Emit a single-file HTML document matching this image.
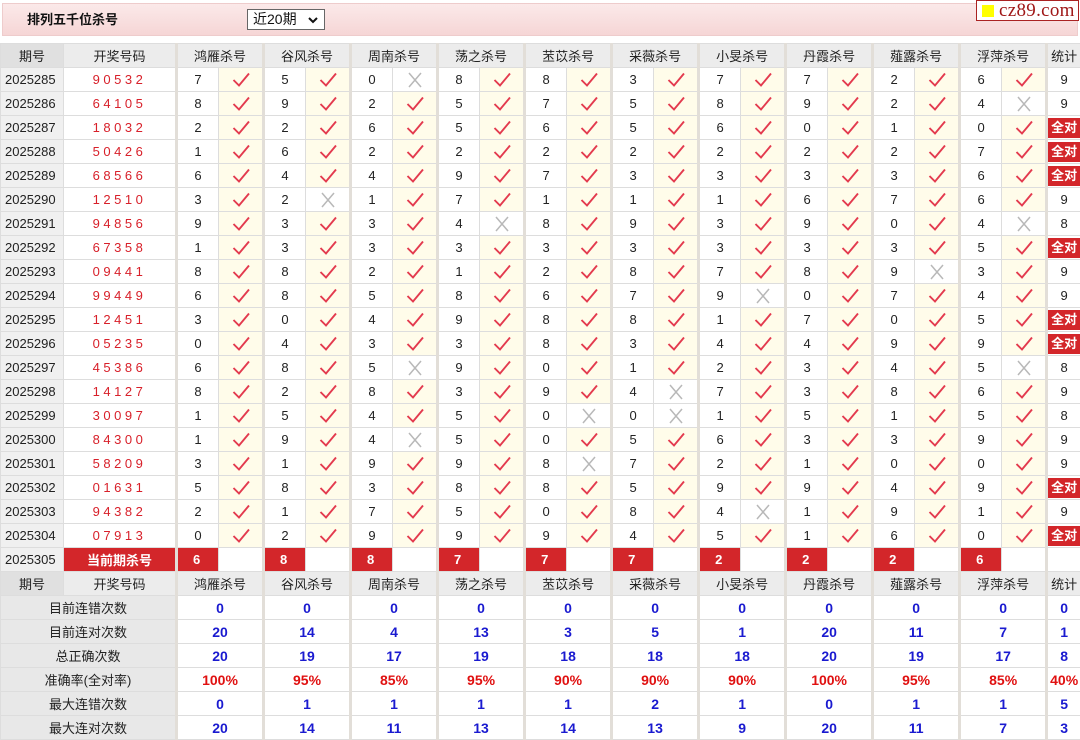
<!DOCTYPE html>
<html><head><meta charset="utf-8">
<style>
*{margin:0;padding:0;box-sizing:border-box}
body{width:1080px;height:739px;background:#fff;font-family:"Liberation Sans","Noto Sans CJK SC",sans-serif;font-size:13px;color:#222;overflow:hidden;position:relative}
.top{position:absolute;left:2px;top:3px;width:1076px;height:33px;background:linear-gradient(#fbe9e9,#f6d6d6);border:1px solid #ecc}
.title{position:absolute;left:24px;top:5px;font-weight:bold;font-size:13px;color:#111}
.sel{position:absolute;left:244px;top:5px;width:78px;height:21px;border:1px solid #666;background:#fff;font-size:14px;padding-left:5px;line-height:19px;color:#111}
.sel svg{position:absolute;right:6px;top:7px}
.logo{position:absolute;left:976px;top:0px;width:103px;height:21px;border:1px solid #a22;background:#fff;font-family:"Liberation Serif",serif;font-size:19px;color:#a01818;line-height:19px;padding-left:22px;letter-spacing:0.3px}
.logo i{position:absolute;left:5px;top:4px;width:12px;height:12px;background:#ff0}
table{position:absolute;left:0;top:43px;border-collapse:collapse;table-layout:fixed;width:1080px}
td{height:24px;border:1px solid #ddd;text-align:center;white-space:nowrap;overflow:hidden;padding:0}
td.p{background:#f0f0f0;text-align:left;padding-left:4px}
td.c{color:#d8202a;letter-spacing:3.5px}
td.n{border-left:3px solid #e2ded8}
td.k{background:#fffcea}
td.x{background:#fff}
tr.h td{background:#ececec;font-size:13px}
tr.h td.p{background:#e0e0e0;text-align:center;padding:0}
tr.cur td.c,tr.cur td.r{background:#d3262a;color:#fff;font-weight:bold;letter-spacing:0;font-size:13px}
tr.cur td.r{text-align:left;padding-left:15px}
td.s{border-left:3px solid #e2ded8}
.qd{display:inline-block;background:#d3262a;color:#fff;font-weight:bold;padding:0 3px;line-height:20px}
td.lab{background:#e8e8e8}
td.v{color:#1a1ad0;font-weight:bold;border-left:3px solid #e2ded8;font-size:14px}
td.v.rd{color:#e01010}
svg.i{width:20px;height:16px;vertical-align:middle}
</style></head><body>
<svg width="0" height="0" style="position:absolute"><defs>
<symbol id="ck" viewBox="0 0 20 16"><path d="M2.5 8 L8 13.5 L18 1.5" fill="none" stroke="#e33a4e" stroke-width="1.9"/></symbol>
<symbol id="xx" viewBox="0 0 20 16"><path d="M4 1 L16 15 M16 1 L4 15" fill="none" stroke="#b8b8b8" stroke-width="1.5"/></symbol>
</defs></svg>
<div class="top"><div class="title">排列五千位杀号</div><div class="sel">近20期<svg width="10" height="7"><path d="M1 1 L5 5 L9 1" fill="none" stroke="#111" stroke-width="2"/></svg></div></div>
<div class="logo"><i></i>cz89.com</div>
<table>
<colgroup><col style="width:63px"><col style="width:113px"><col style="width:42px"><col style="width:45px"><col style="width:42px"><col style="width:45px"><col style="width:42px"><col style="width:45px"><col style="width:42px"><col style="width:45px"><col style="width:42px"><col style="width:45px"><col style="width:42px"><col style="width:45px"><col style="width:42px"><col style="width:45px"><col style="width:42px"><col style="width:45px"><col style="width:42px"><col style="width:45px"><col style="width:42px"><col style="width:45px"><col style="width:34px"></colgroup>
<tr class="h"><td class="p">期号</td><td>开奖号码</td><td colspan="2" class="s">鸿雁杀号</td><td colspan="2" class="s">谷风杀号</td><td colspan="2" class="s">周南杀号</td><td colspan="2" class="s">荡之杀号</td><td colspan="2" class="s">苤苡杀号</td><td colspan="2" class="s">采薇杀号</td><td colspan="2" class="s">小旻杀号</td><td colspan="2" class="s">丹霞杀号</td><td colspan="2" class="s">薤露杀号</td><td colspan="2" class="s">浮萍杀号</td><td class="s">统计</td></tr>
<tr><td class="p">2025285</td><td class="c">90532</td><td class="n">7</td><td class="k"><svg class="i"><use href="#ck"/></svg></td><td class="n">5</td><td class="k"><svg class="i"><use href="#ck"/></svg></td><td class="n">0</td><td class="x"><svg class="i"><use href="#xx"/></svg></td><td class="n">8</td><td class="k"><svg class="i"><use href="#ck"/></svg></td><td class="n">8</td><td class="k"><svg class="i"><use href="#ck"/></svg></td><td class="n">3</td><td class="k"><svg class="i"><use href="#ck"/></svg></td><td class="n">7</td><td class="k"><svg class="i"><use href="#ck"/></svg></td><td class="n">7</td><td class="k"><svg class="i"><use href="#ck"/></svg></td><td class="n">2</td><td class="k"><svg class="i"><use href="#ck"/></svg></td><td class="n">6</td><td class="k"><svg class="i"><use href="#ck"/></svg></td><td class="s">9</td></tr>
<tr><td class="p">2025286</td><td class="c">64105</td><td class="n">8</td><td class="k"><svg class="i"><use href="#ck"/></svg></td><td class="n">9</td><td class="k"><svg class="i"><use href="#ck"/></svg></td><td class="n">2</td><td class="k"><svg class="i"><use href="#ck"/></svg></td><td class="n">5</td><td class="k"><svg class="i"><use href="#ck"/></svg></td><td class="n">7</td><td class="k"><svg class="i"><use href="#ck"/></svg></td><td class="n">5</td><td class="k"><svg class="i"><use href="#ck"/></svg></td><td class="n">8</td><td class="k"><svg class="i"><use href="#ck"/></svg></td><td class="n">9</td><td class="k"><svg class="i"><use href="#ck"/></svg></td><td class="n">2</td><td class="k"><svg class="i"><use href="#ck"/></svg></td><td class="n">4</td><td class="x"><svg class="i"><use href="#xx"/></svg></td><td class="s">9</td></tr>
<tr><td class="p">2025287</td><td class="c">18032</td><td class="n">2</td><td class="k"><svg class="i"><use href="#ck"/></svg></td><td class="n">2</td><td class="k"><svg class="i"><use href="#ck"/></svg></td><td class="n">6</td><td class="k"><svg class="i"><use href="#ck"/></svg></td><td class="n">5</td><td class="k"><svg class="i"><use href="#ck"/></svg></td><td class="n">6</td><td class="k"><svg class="i"><use href="#ck"/></svg></td><td class="n">5</td><td class="k"><svg class="i"><use href="#ck"/></svg></td><td class="n">6</td><td class="k"><svg class="i"><use href="#ck"/></svg></td><td class="n">0</td><td class="k"><svg class="i"><use href="#ck"/></svg></td><td class="n">1</td><td class="k"><svg class="i"><use href="#ck"/></svg></td><td class="n">0</td><td class="k"><svg class="i"><use href="#ck"/></svg></td><td class="s"><span class="qd">全对</span></td></tr>
<tr><td class="p">2025288</td><td class="c">50426</td><td class="n">1</td><td class="k"><svg class="i"><use href="#ck"/></svg></td><td class="n">6</td><td class="k"><svg class="i"><use href="#ck"/></svg></td><td class="n">2</td><td class="k"><svg class="i"><use href="#ck"/></svg></td><td class="n">2</td><td class="k"><svg class="i"><use href="#ck"/></svg></td><td class="n">2</td><td class="k"><svg class="i"><use href="#ck"/></svg></td><td class="n">2</td><td class="k"><svg class="i"><use href="#ck"/></svg></td><td class="n">2</td><td class="k"><svg class="i"><use href="#ck"/></svg></td><td class="n">2</td><td class="k"><svg class="i"><use href="#ck"/></svg></td><td class="n">2</td><td class="k"><svg class="i"><use href="#ck"/></svg></td><td class="n">7</td><td class="k"><svg class="i"><use href="#ck"/></svg></td><td class="s"><span class="qd">全对</span></td></tr>
<tr><td class="p">2025289</td><td class="c">68566</td><td class="n">6</td><td class="k"><svg class="i"><use href="#ck"/></svg></td><td class="n">4</td><td class="k"><svg class="i"><use href="#ck"/></svg></td><td class="n">4</td><td class="k"><svg class="i"><use href="#ck"/></svg></td><td class="n">9</td><td class="k"><svg class="i"><use href="#ck"/></svg></td><td class="n">7</td><td class="k"><svg class="i"><use href="#ck"/></svg></td><td class="n">3</td><td class="k"><svg class="i"><use href="#ck"/></svg></td><td class="n">3</td><td class="k"><svg class="i"><use href="#ck"/></svg></td><td class="n">3</td><td class="k"><svg class="i"><use href="#ck"/></svg></td><td class="n">3</td><td class="k"><svg class="i"><use href="#ck"/></svg></td><td class="n">6</td><td class="k"><svg class="i"><use href="#ck"/></svg></td><td class="s"><span class="qd">全对</span></td></tr>
<tr><td class="p">2025290</td><td class="c">12510</td><td class="n">3</td><td class="k"><svg class="i"><use href="#ck"/></svg></td><td class="n">2</td><td class="x"><svg class="i"><use href="#xx"/></svg></td><td class="n">1</td><td class="k"><svg class="i"><use href="#ck"/></svg></td><td class="n">7</td><td class="k"><svg class="i"><use href="#ck"/></svg></td><td class="n">1</td><td class="k"><svg class="i"><use href="#ck"/></svg></td><td class="n">1</td><td class="k"><svg class="i"><use href="#ck"/></svg></td><td class="n">1</td><td class="k"><svg class="i"><use href="#ck"/></svg></td><td class="n">6</td><td class="k"><svg class="i"><use href="#ck"/></svg></td><td class="n">7</td><td class="k"><svg class="i"><use href="#ck"/></svg></td><td class="n">6</td><td class="k"><svg class="i"><use href="#ck"/></svg></td><td class="s">9</td></tr>
<tr><td class="p">2025291</td><td class="c">94856</td><td class="n">9</td><td class="k"><svg class="i"><use href="#ck"/></svg></td><td class="n">3</td><td class="k"><svg class="i"><use href="#ck"/></svg></td><td class="n">3</td><td class="k"><svg class="i"><use href="#ck"/></svg></td><td class="n">4</td><td class="x"><svg class="i"><use href="#xx"/></svg></td><td class="n">8</td><td class="k"><svg class="i"><use href="#ck"/></svg></td><td class="n">9</td><td class="k"><svg class="i"><use href="#ck"/></svg></td><td class="n">3</td><td class="k"><svg class="i"><use href="#ck"/></svg></td><td class="n">9</td><td class="k"><svg class="i"><use href="#ck"/></svg></td><td class="n">0</td><td class="k"><svg class="i"><use href="#ck"/></svg></td><td class="n">4</td><td class="x"><svg class="i"><use href="#xx"/></svg></td><td class="s">8</td></tr>
<tr><td class="p">2025292</td><td class="c">67358</td><td class="n">1</td><td class="k"><svg class="i"><use href="#ck"/></svg></td><td class="n">3</td><td class="k"><svg class="i"><use href="#ck"/></svg></td><td class="n">3</td><td class="k"><svg class="i"><use href="#ck"/></svg></td><td class="n">3</td><td class="k"><svg class="i"><use href="#ck"/></svg></td><td class="n">3</td><td class="k"><svg class="i"><use href="#ck"/></svg></td><td class="n">3</td><td class="k"><svg class="i"><use href="#ck"/></svg></td><td class="n">3</td><td class="k"><svg class="i"><use href="#ck"/></svg></td><td class="n">3</td><td class="k"><svg class="i"><use href="#ck"/></svg></td><td class="n">3</td><td class="k"><svg class="i"><use href="#ck"/></svg></td><td class="n">5</td><td class="k"><svg class="i"><use href="#ck"/></svg></td><td class="s"><span class="qd">全对</span></td></tr>
<tr><td class="p">2025293</td><td class="c">09441</td><td class="n">8</td><td class="k"><svg class="i"><use href="#ck"/></svg></td><td class="n">8</td><td class="k"><svg class="i"><use href="#ck"/></svg></td><td class="n">2</td><td class="k"><svg class="i"><use href="#ck"/></svg></td><td class="n">1</td><td class="k"><svg class="i"><use href="#ck"/></svg></td><td class="n">2</td><td class="k"><svg class="i"><use href="#ck"/></svg></td><td class="n">8</td><td class="k"><svg class="i"><use href="#ck"/></svg></td><td class="n">7</td><td class="k"><svg class="i"><use href="#ck"/></svg></td><td class="n">8</td><td class="k"><svg class="i"><use href="#ck"/></svg></td><td class="n">9</td><td class="x"><svg class="i"><use href="#xx"/></svg></td><td class="n">3</td><td class="k"><svg class="i"><use href="#ck"/></svg></td><td class="s">9</td></tr>
<tr><td class="p">2025294</td><td class="c">99449</td><td class="n">6</td><td class="k"><svg class="i"><use href="#ck"/></svg></td><td class="n">8</td><td class="k"><svg class="i"><use href="#ck"/></svg></td><td class="n">5</td><td class="k"><svg class="i"><use href="#ck"/></svg></td><td class="n">8</td><td class="k"><svg class="i"><use href="#ck"/></svg></td><td class="n">6</td><td class="k"><svg class="i"><use href="#ck"/></svg></td><td class="n">7</td><td class="k"><svg class="i"><use href="#ck"/></svg></td><td class="n">9</td><td class="x"><svg class="i"><use href="#xx"/></svg></td><td class="n">0</td><td class="k"><svg class="i"><use href="#ck"/></svg></td><td class="n">7</td><td class="k"><svg class="i"><use href="#ck"/></svg></td><td class="n">4</td><td class="k"><svg class="i"><use href="#ck"/></svg></td><td class="s">9</td></tr>
<tr><td class="p">2025295</td><td class="c">12451</td><td class="n">3</td><td class="k"><svg class="i"><use href="#ck"/></svg></td><td class="n">0</td><td class="k"><svg class="i"><use href="#ck"/></svg></td><td class="n">4</td><td class="k"><svg class="i"><use href="#ck"/></svg></td><td class="n">9</td><td class="k"><svg class="i"><use href="#ck"/></svg></td><td class="n">8</td><td class="k"><svg class="i"><use href="#ck"/></svg></td><td class="n">8</td><td class="k"><svg class="i"><use href="#ck"/></svg></td><td class="n">1</td><td class="k"><svg class="i"><use href="#ck"/></svg></td><td class="n">7</td><td class="k"><svg class="i"><use href="#ck"/></svg></td><td class="n">0</td><td class="k"><svg class="i"><use href="#ck"/></svg></td><td class="n">5</td><td class="k"><svg class="i"><use href="#ck"/></svg></td><td class="s"><span class="qd">全对</span></td></tr>
<tr><td class="p">2025296</td><td class="c">05235</td><td class="n">0</td><td class="k"><svg class="i"><use href="#ck"/></svg></td><td class="n">4</td><td class="k"><svg class="i"><use href="#ck"/></svg></td><td class="n">3</td><td class="k"><svg class="i"><use href="#ck"/></svg></td><td class="n">3</td><td class="k"><svg class="i"><use href="#ck"/></svg></td><td class="n">8</td><td class="k"><svg class="i"><use href="#ck"/></svg></td><td class="n">3</td><td class="k"><svg class="i"><use href="#ck"/></svg></td><td class="n">4</td><td class="k"><svg class="i"><use href="#ck"/></svg></td><td class="n">4</td><td class="k"><svg class="i"><use href="#ck"/></svg></td><td class="n">9</td><td class="k"><svg class="i"><use href="#ck"/></svg></td><td class="n">9</td><td class="k"><svg class="i"><use href="#ck"/></svg></td><td class="s"><span class="qd">全对</span></td></tr>
<tr><td class="p">2025297</td><td class="c">45386</td><td class="n">6</td><td class="k"><svg class="i"><use href="#ck"/></svg></td><td class="n">8</td><td class="k"><svg class="i"><use href="#ck"/></svg></td><td class="n">5</td><td class="x"><svg class="i"><use href="#xx"/></svg></td><td class="n">9</td><td class="k"><svg class="i"><use href="#ck"/></svg></td><td class="n">0</td><td class="k"><svg class="i"><use href="#ck"/></svg></td><td class="n">1</td><td class="k"><svg class="i"><use href="#ck"/></svg></td><td class="n">2</td><td class="k"><svg class="i"><use href="#ck"/></svg></td><td class="n">3</td><td class="k"><svg class="i"><use href="#ck"/></svg></td><td class="n">4</td><td class="k"><svg class="i"><use href="#ck"/></svg></td><td class="n">5</td><td class="x"><svg class="i"><use href="#xx"/></svg></td><td class="s">8</td></tr>
<tr><td class="p">2025298</td><td class="c">14127</td><td class="n">8</td><td class="k"><svg class="i"><use href="#ck"/></svg></td><td class="n">2</td><td class="k"><svg class="i"><use href="#ck"/></svg></td><td class="n">8</td><td class="k"><svg class="i"><use href="#ck"/></svg></td><td class="n">3</td><td class="k"><svg class="i"><use href="#ck"/></svg></td><td class="n">9</td><td class="k"><svg class="i"><use href="#ck"/></svg></td><td class="n">4</td><td class="x"><svg class="i"><use href="#xx"/></svg></td><td class="n">7</td><td class="k"><svg class="i"><use href="#ck"/></svg></td><td class="n">3</td><td class="k"><svg class="i"><use href="#ck"/></svg></td><td class="n">8</td><td class="k"><svg class="i"><use href="#ck"/></svg></td><td class="n">6</td><td class="k"><svg class="i"><use href="#ck"/></svg></td><td class="s">9</td></tr>
<tr><td class="p">2025299</td><td class="c">30097</td><td class="n">1</td><td class="k"><svg class="i"><use href="#ck"/></svg></td><td class="n">5</td><td class="k"><svg class="i"><use href="#ck"/></svg></td><td class="n">4</td><td class="k"><svg class="i"><use href="#ck"/></svg></td><td class="n">5</td><td class="k"><svg class="i"><use href="#ck"/></svg></td><td class="n">0</td><td class="x"><svg class="i"><use href="#xx"/></svg></td><td class="n">0</td><td class="x"><svg class="i"><use href="#xx"/></svg></td><td class="n">1</td><td class="k"><svg class="i"><use href="#ck"/></svg></td><td class="n">5</td><td class="k"><svg class="i"><use href="#ck"/></svg></td><td class="n">1</td><td class="k"><svg class="i"><use href="#ck"/></svg></td><td class="n">5</td><td class="k"><svg class="i"><use href="#ck"/></svg></td><td class="s">8</td></tr>
<tr><td class="p">2025300</td><td class="c">84300</td><td class="n">1</td><td class="k"><svg class="i"><use href="#ck"/></svg></td><td class="n">9</td><td class="k"><svg class="i"><use href="#ck"/></svg></td><td class="n">4</td><td class="x"><svg class="i"><use href="#xx"/></svg></td><td class="n">5</td><td class="k"><svg class="i"><use href="#ck"/></svg></td><td class="n">0</td><td class="k"><svg class="i"><use href="#ck"/></svg></td><td class="n">5</td><td class="k"><svg class="i"><use href="#ck"/></svg></td><td class="n">6</td><td class="k"><svg class="i"><use href="#ck"/></svg></td><td class="n">3</td><td class="k"><svg class="i"><use href="#ck"/></svg></td><td class="n">3</td><td class="k"><svg class="i"><use href="#ck"/></svg></td><td class="n">9</td><td class="k"><svg class="i"><use href="#ck"/></svg></td><td class="s">9</td></tr>
<tr><td class="p">2025301</td><td class="c">58209</td><td class="n">3</td><td class="k"><svg class="i"><use href="#ck"/></svg></td><td class="n">1</td><td class="k"><svg class="i"><use href="#ck"/></svg></td><td class="n">9</td><td class="k"><svg class="i"><use href="#ck"/></svg></td><td class="n">9</td><td class="k"><svg class="i"><use href="#ck"/></svg></td><td class="n">8</td><td class="x"><svg class="i"><use href="#xx"/></svg></td><td class="n">7</td><td class="k"><svg class="i"><use href="#ck"/></svg></td><td class="n">2</td><td class="k"><svg class="i"><use href="#ck"/></svg></td><td class="n">1</td><td class="k"><svg class="i"><use href="#ck"/></svg></td><td class="n">0</td><td class="k"><svg class="i"><use href="#ck"/></svg></td><td class="n">0</td><td class="k"><svg class="i"><use href="#ck"/></svg></td><td class="s">9</td></tr>
<tr><td class="p">2025302</td><td class="c">01631</td><td class="n">5</td><td class="k"><svg class="i"><use href="#ck"/></svg></td><td class="n">8</td><td class="k"><svg class="i"><use href="#ck"/></svg></td><td class="n">3</td><td class="k"><svg class="i"><use href="#ck"/></svg></td><td class="n">8</td><td class="k"><svg class="i"><use href="#ck"/></svg></td><td class="n">8</td><td class="k"><svg class="i"><use href="#ck"/></svg></td><td class="n">5</td><td class="k"><svg class="i"><use href="#ck"/></svg></td><td class="n">9</td><td class="k"><svg class="i"><use href="#ck"/></svg></td><td class="n">9</td><td class="k"><svg class="i"><use href="#ck"/></svg></td><td class="n">4</td><td class="k"><svg class="i"><use href="#ck"/></svg></td><td class="n">9</td><td class="k"><svg class="i"><use href="#ck"/></svg></td><td class="s"><span class="qd">全对</span></td></tr>
<tr><td class="p">2025303</td><td class="c">94382</td><td class="n">2</td><td class="k"><svg class="i"><use href="#ck"/></svg></td><td class="n">1</td><td class="k"><svg class="i"><use href="#ck"/></svg></td><td class="n">7</td><td class="k"><svg class="i"><use href="#ck"/></svg></td><td class="n">5</td><td class="k"><svg class="i"><use href="#ck"/></svg></td><td class="n">0</td><td class="k"><svg class="i"><use href="#ck"/></svg></td><td class="n">8</td><td class="k"><svg class="i"><use href="#ck"/></svg></td><td class="n">4</td><td class="x"><svg class="i"><use href="#xx"/></svg></td><td class="n">1</td><td class="k"><svg class="i"><use href="#ck"/></svg></td><td class="n">9</td><td class="k"><svg class="i"><use href="#ck"/></svg></td><td class="n">1</td><td class="k"><svg class="i"><use href="#ck"/></svg></td><td class="s">9</td></tr>
<tr><td class="p">2025304</td><td class="c">07913</td><td class="n">0</td><td class="k"><svg class="i"><use href="#ck"/></svg></td><td class="n">2</td><td class="k"><svg class="i"><use href="#ck"/></svg></td><td class="n">9</td><td class="k"><svg class="i"><use href="#ck"/></svg></td><td class="n">9</td><td class="k"><svg class="i"><use href="#ck"/></svg></td><td class="n">9</td><td class="k"><svg class="i"><use href="#ck"/></svg></td><td class="n">4</td><td class="k"><svg class="i"><use href="#ck"/></svg></td><td class="n">5</td><td class="k"><svg class="i"><use href="#ck"/></svg></td><td class="n">1</td><td class="k"><svg class="i"><use href="#ck"/></svg></td><td class="n">6</td><td class="k"><svg class="i"><use href="#ck"/></svg></td><td class="n">0</td><td class="k"><svg class="i"><use href="#ck"/></svg></td><td class="s"><span class="qd">全对</span></td></tr>
<tr class="cur"><td class="p">2025305</td><td class="c">当前期杀号</td><td class="n r">6</td><td></td><td class="n r">8</td><td></td><td class="n r">8</td><td></td><td class="n r">7</td><td></td><td class="n r">7</td><td></td><td class="n r">7</td><td></td><td class="n r">2</td><td></td><td class="n r">2</td><td></td><td class="n r">2</td><td></td><td class="n r">6</td><td></td><td class="s"></td></tr>
<tr class="h"><td class="p">期号</td><td>开奖号码</td><td colspan="2" class="s">鸿雁杀号</td><td colspan="2" class="s">谷风杀号</td><td colspan="2" class="s">周南杀号</td><td colspan="2" class="s">荡之杀号</td><td colspan="2" class="s">苤苡杀号</td><td colspan="2" class="s">采薇杀号</td><td colspan="2" class="s">小旻杀号</td><td colspan="2" class="s">丹霞杀号</td><td colspan="2" class="s">薤露杀号</td><td colspan="2" class="s">浮萍杀号</td><td class="s">统计</td></tr>
<tr><td colspan="2" class="lab">目前连错次数</td><td colspan="2" class="v">0</td><td colspan="2" class="v">0</td><td colspan="2" class="v">0</td><td colspan="2" class="v">0</td><td colspan="2" class="v">0</td><td colspan="2" class="v">0</td><td colspan="2" class="v">0</td><td colspan="2" class="v">0</td><td colspan="2" class="v">0</td><td colspan="2" class="v">0</td><td class="v">0</td></tr>
<tr><td colspan="2" class="lab">目前连对次数</td><td colspan="2" class="v">20</td><td colspan="2" class="v">14</td><td colspan="2" class="v">4</td><td colspan="2" class="v">13</td><td colspan="2" class="v">3</td><td colspan="2" class="v">5</td><td colspan="2" class="v">1</td><td colspan="2" class="v">20</td><td colspan="2" class="v">11</td><td colspan="2" class="v">7</td><td class="v">1</td></tr>
<tr><td colspan="2" class="lab">总正确次数</td><td colspan="2" class="v">20</td><td colspan="2" class="v">19</td><td colspan="2" class="v">17</td><td colspan="2" class="v">19</td><td colspan="2" class="v">18</td><td colspan="2" class="v">18</td><td colspan="2" class="v">18</td><td colspan="2" class="v">20</td><td colspan="2" class="v">19</td><td colspan="2" class="v">17</td><td class="v">8</td></tr>
<tr><td colspan="2" class="lab">准确率(全对率)</td><td colspan="2" class="v rd">100%</td><td colspan="2" class="v rd">95%</td><td colspan="2" class="v rd">85%</td><td colspan="2" class="v rd">95%</td><td colspan="2" class="v rd">90%</td><td colspan="2" class="v rd">90%</td><td colspan="2" class="v rd">90%</td><td colspan="2" class="v rd">100%</td><td colspan="2" class="v rd">95%</td><td colspan="2" class="v rd">85%</td><td class="v rd">40%</td></tr>
<tr><td colspan="2" class="lab">最大连错次数</td><td colspan="2" class="v">0</td><td colspan="2" class="v">1</td><td colspan="2" class="v">1</td><td colspan="2" class="v">1</td><td colspan="2" class="v">1</td><td colspan="2" class="v">2</td><td colspan="2" class="v">1</td><td colspan="2" class="v">0</td><td colspan="2" class="v">1</td><td colspan="2" class="v">1</td><td class="v">5</td></tr>
<tr><td colspan="2" class="lab">最大连对次数</td><td colspan="2" class="v">20</td><td colspan="2" class="v">14</td><td colspan="2" class="v">11</td><td colspan="2" class="v">13</td><td colspan="2" class="v">14</td><td colspan="2" class="v">13</td><td colspan="2" class="v">9</td><td colspan="2" class="v">20</td><td colspan="2" class="v">11</td><td colspan="2" class="v">7</td><td class="v">3</td></tr>
</table>
</body></html>
